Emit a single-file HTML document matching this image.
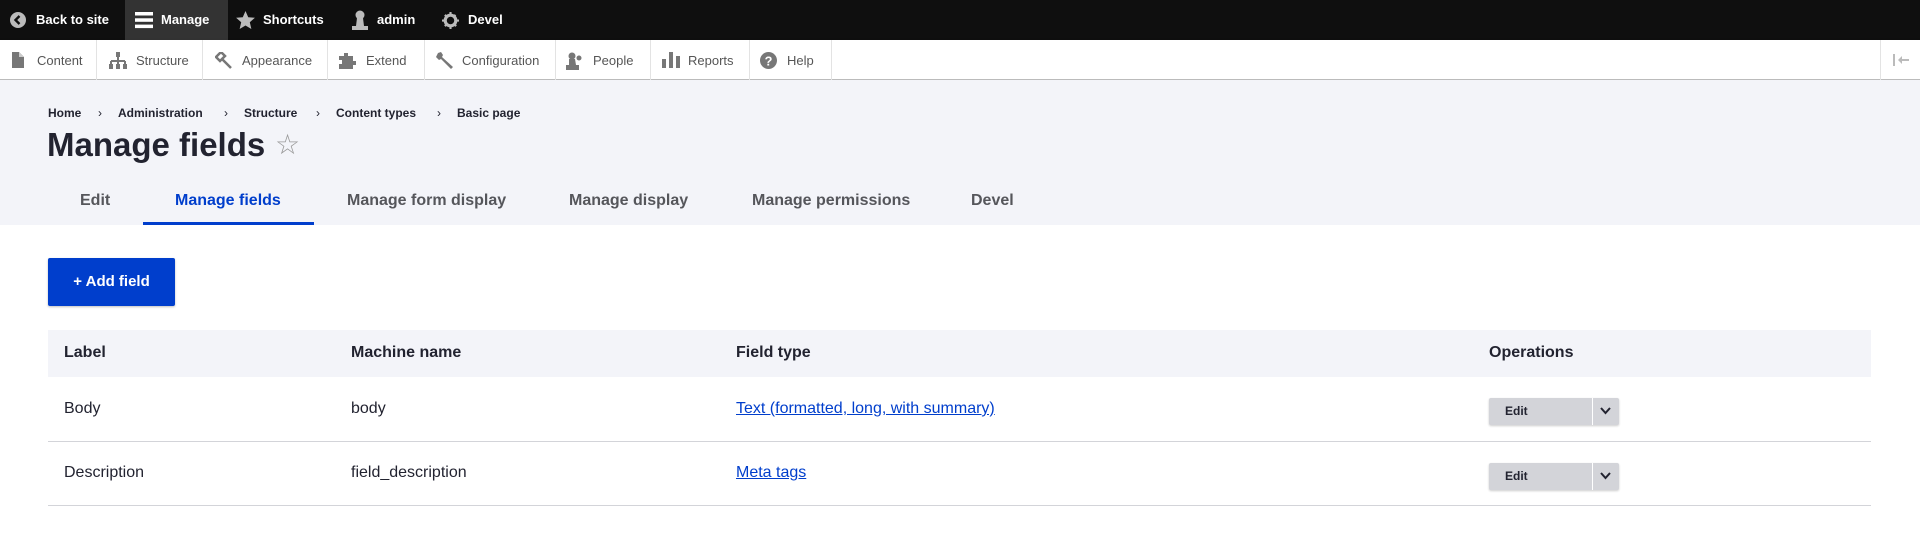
<!DOCTYPE html>
<html><head><meta charset="utf-8"><style>
*{box-sizing:border-box;margin:0;padding:0}
body{width:1920px;height:543px;background:#fff;font-family:"Liberation Sans",sans-serif;position:relative;overflow:hidden;color:#222330}
.abs{position:absolute;white-space:nowrap}
.bar{position:absolute;left:0;top:0;width:1920px;height:40px;background:#0f0f0f}
.bar .t{position:absolute;top:12px;color:#fff;font-weight:bold;font-size:13px}
.tray{position:absolute;left:0;top:40px;width:1920px;height:40px;background:#fff;box-shadow:0 2px 3px rgba(0,0,0,.35);border-bottom:1px solid #bbb}
.tray .t{position:absolute;top:13px;color:#565656;font-size:13px}
.tray .sep{position:absolute;top:0;width:1px;height:40px;background:#e3e3e3}
.gray{position:absolute;left:0;top:80px;width:1920px;height:145px;background:#f3f4f9}
.bc{position:absolute;top:106px;font-size:12px;font-weight:bold;color:#222330}
.tab{position:absolute;top:192px;font-size:16px;font-weight:bold;color:#55565b}
.th{position:absolute;font-weight:bold;font-size:16px;top:344px}
.td{position:absolute;font-size:16px}
a{color:#003ecc;text-decoration:underline}
.eb{position:absolute;left:1489px;width:130px;height:27px;background:#d3d4d9;border-radius:2px;box-shadow:0 1px 2px rgba(0,0,0,.2)}
.eb span{position:absolute;left:16px;top:6px;font-size:12px;font-weight:bold}
.eb i{position:absolute;left:103px;top:0;width:1px;height:27px;background:#fff}
</style></head><body>
<div class="bar">
 <div class="abs" style="left:125px;top:0;width:103px;height:40px;background:#333"></div>
 <svg class="abs" style="left:10px;top:12px" width="16" height="16" viewBox="0 0 16 16"><circle cx="8" cy="8" r="8" fill="#bbb"/><path d="M9.5 4L5.5 8l4 4" stroke="#0f0f0f" stroke-width="2.4" fill="none"/></svg>
 <div class="t" style="left:36px">Back to site</div>
 <svg class="abs" style="left:135px;top:11px" width="18" height="18" viewBox="0 0 18 18"><rect y="1" width="18" height="3.5" fill="#fff"/><rect y="7.3" width="18" height="3.5" fill="#fff"/><rect y="13.6" width="18" height="3.5" fill="#fff"/></svg>
 <div class="t" style="left:161px">Manage</div>
 <svg class="abs" style="left:236px;top:11px" width="19" height="18" viewBox="0 0 24 23"><path d="M12 0l3.5 8 8.5.7-6.5 5.7 2 8.6L12 18.5 4.5 23l2-8.6L0 8.7 8.5 8z" fill="#bbb"/></svg>
 <div class="t" style="left:263px">Shortcuts</div>
 <svg class="abs" style="left:352px;top:10px" width="16" height="20" viewBox="0 0 16 20"><circle cx="8" cy="5" r="4.5" fill="#bbb"/><path d="M5 8h6l1 8h4v4H0v-4h4z" fill="#bbb"/></svg>
 <div class="t" style="left:377px">admin</div>
 <svg class="abs" style="left:442px;top:12px" width="17" height="17" viewBox="0 0 16 16"><circle cx="8" cy="8" r="5" fill="none" stroke="#bbb" stroke-width="3"/><path d="M7 0h2v3H7zM7 13h2v3H7zM0 7h3v2H0zM13 7h3v2h-3zM2 3.4L3.4 2l2 2L4 5.4zM10.6 12l1.4-1.4 2 2-1.4 1.4zM12 2l1.4 1.4-2 2L10 4zM2 12.6l2-2 1.4 1.4-2 2z" fill="#bbb"/></svg>
 <div class="t" style="left:468px">Devel</div>
</div>
<div class="tray">
 <div class="sep" style="left:96px"></div><div class="sep" style="left:202px"></div><div class="sep" style="left:327px"></div><div class="sep" style="left:424px"></div><div class="sep" style="left:555px"></div><div class="sep" style="left:650px"></div><div class="sep" style="left:749px"></div><div class="sep" style="left:831px"></div><div class="sep" style="left:1880px"></div>
 <svg class="abs" style="left:12px;top:12px" width="12" height="16" viewBox="0 0 12 16"><path d="M0 0h7l5 5v11H0z" fill="#777"/><path d="M7 0v5h5" fill="#ccc"/></svg>
 <div class="t" style="left:37px">Content</div>
 <svg class="abs" style="left:108px;top:12px" width="20" height="17" viewBox="0 0 20 17"><rect x="8" y="0" width="4" height="5" fill="#777"/><path d="M10 5v4M3 9h14M3 9v4M10 9v4M17 9v4" stroke="#777" stroke-width="2" fill="none"/><rect x="1" y="12" width="4" height="5" fill="#777"/><rect x="8" y="12" width="4" height="5" fill="#777"/><rect x="15" y="12" width="4" height="5" fill="#777"/></svg>
 <div class="t" style="left:136px">Structure</div>
 <svg class="abs" style="left:215px;top:12px" width="17" height="17" viewBox="0 0 17 17"><path d="M1 5l5-5 4 4-5 5zM7 7l9 9" stroke="#777" stroke-width="2.5" fill="none"/></svg>
 <div class="t" style="left:242px">Appearance</div>
 <svg class="abs" style="left:339px;top:12px" width="18" height="17" viewBox="0 0 18 17"><path d="M0 4h5V1h4v3h5v5h3v4h-3v4H0v-5h3V8H0z" fill="#777"/></svg>
 <div class="t" style="left:366px">Extend</div>
 <svg class="abs" style="left:436px;top:11px" width="18" height="18" viewBox="0 0 18 18"><path d="M2 2l3-1 2 3-1 2 11 10-2 2L5 8 3 9 0 6z" fill="#777"/></svg>
 <div class="t" style="left:462px">Configuration</div>
 <svg class="abs" style="left:566px;top:12px" width="18" height="18" viewBox="0 0 18 18"><circle cx="6" cy="4" r="3.5" fill="#777"/><path d="M3 7h6l1 6h3v5H0v-5h3z" fill="#777"/><circle cx="13" cy="6" r="2.5" fill="#777"/></svg>
 <div class="t" style="left:593px">People</div>
 <svg class="abs" style="left:662px;top:12px" width="18" height="16" viewBox="0 0 18 16"><rect x="0" y="7" width="4" height="9" fill="#777"/><rect x="7" y="0" width="4" height="16" fill="#777"/><rect x="14" y="4" width="4" height="12" fill="#777"/></svg>
 <div class="t" style="left:688px">Reports</div>
 <svg class="abs" style="left:760px;top:12px" width="17" height="17" viewBox="0 0 16 16"><circle cx="8" cy="8" r="8" fill="#777"/><text x="8" y="12.5" font-size="12" font-weight="bold" fill="#fff" text-anchor="middle" font-family="Liberation Sans">?</text></svg>
 <div class="t" style="left:787px">Help</div>
 <svg class="abs" style="left:1893px;top:14px" width="16" height="12" viewBox="0 0 16 12"><rect x="0" y="0" width="2" height="12" fill="#bbb"/><path d="M5 6l4-4v8zM8 5h8v2H8z" fill="#bbb"/></svg>
</div>
<div class="gray"></div>
<div class="bc" style="left:48px">Home</div>
<div class="bc" style="left:98px;font-weight:normal">›</div>
<div class="bc" style="left:118px">Administration</div>
<div class="bc" style="left:224px;font-weight:normal">›</div>
<div class="bc" style="left:244px">Structure</div>
<div class="bc" style="left:316px;font-weight:normal">›</div>
<div class="bc" style="left:336px">Content types</div>
<div class="bc" style="left:437px;font-weight:normal">›</div>
<div class="bc" style="left:457px">Basic page</div>
<div class="abs" style="left:47px;top:126px;font-size:33px;font-weight:bold;color:#222330">Manage fields</div>
<div class="abs" style="left:275px;top:128px;font-size:28px;color:#999">☆</div>
<div class="tab" style="left:80px">Edit</div>
<div class="tab" style="left:175px;color:#003ecc">Manage fields</div>
<div class="abs" style="left:143px;top:222px;width:171px;height:3px;background:#003ecc"></div>
<div class="tab" style="left:347px">Manage form display</div>
<div class="tab" style="left:569px">Manage display</div>
<div class="tab" style="left:752px">Manage permissions</div>
<div class="tab" style="left:971px">Devel</div>
<div class="abs" style="left:48px;top:258px;width:127px;height:48px;background:#003ecc;border-radius:2px;box-shadow:0 1px 2px rgba(0,0,0,.25);color:#fff;font-weight:bold;font-size:15px;line-height:48px;text-align:center">+ Add field</div>
<div class="abs" style="left:48px;top:330px;width:1823px;height:47px;background:#f3f4f9"></div>
<div class="th" style="left:64px">Label</div>
<div class="th" style="left:351px">Machine name</div>
<div class="th" style="left:736px">Field type</div>
<div class="th" style="left:1489px">Operations</div>
<div class="td" style="left:64px;top:400px">Body</div>
<div class="td" style="left:351px;top:400px">body</div>
<div class="td" style="left:736px;top:400px"><a>Text (formatted, long, with summary)</a></div>
<div class="eb" style="top:398px"><span>Edit</span><i></i><svg class="abs" style="left:111px;top:9px" width="11" height="8" viewBox="0 0 11 8"><path d="M1 1l4.5 5L10 1" stroke="#222330" stroke-width="2" fill="none"/></svg></div>
<div class="abs" style="left:48px;top:441px;width:1823px;height:1px;background:#d3d4d9"></div>
<div class="td" style="left:64px;top:464px">Description</div>
<div class="td" style="left:351px;top:464px">field_description</div>
<div class="td" style="left:736px;top:464px"><a>Meta tags</a></div>
<div class="eb" style="top:463px"><span>Edit</span><i></i><svg class="abs" style="left:111px;top:9px" width="11" height="8" viewBox="0 0 11 8"><path d="M1 1l4.5 5L10 1" stroke="#222330" stroke-width="2" fill="none"/></svg></div>
<div class="abs" style="left:48px;top:505px;width:1823px;height:1px;background:#d3d4d9"></div>
</body></html>
